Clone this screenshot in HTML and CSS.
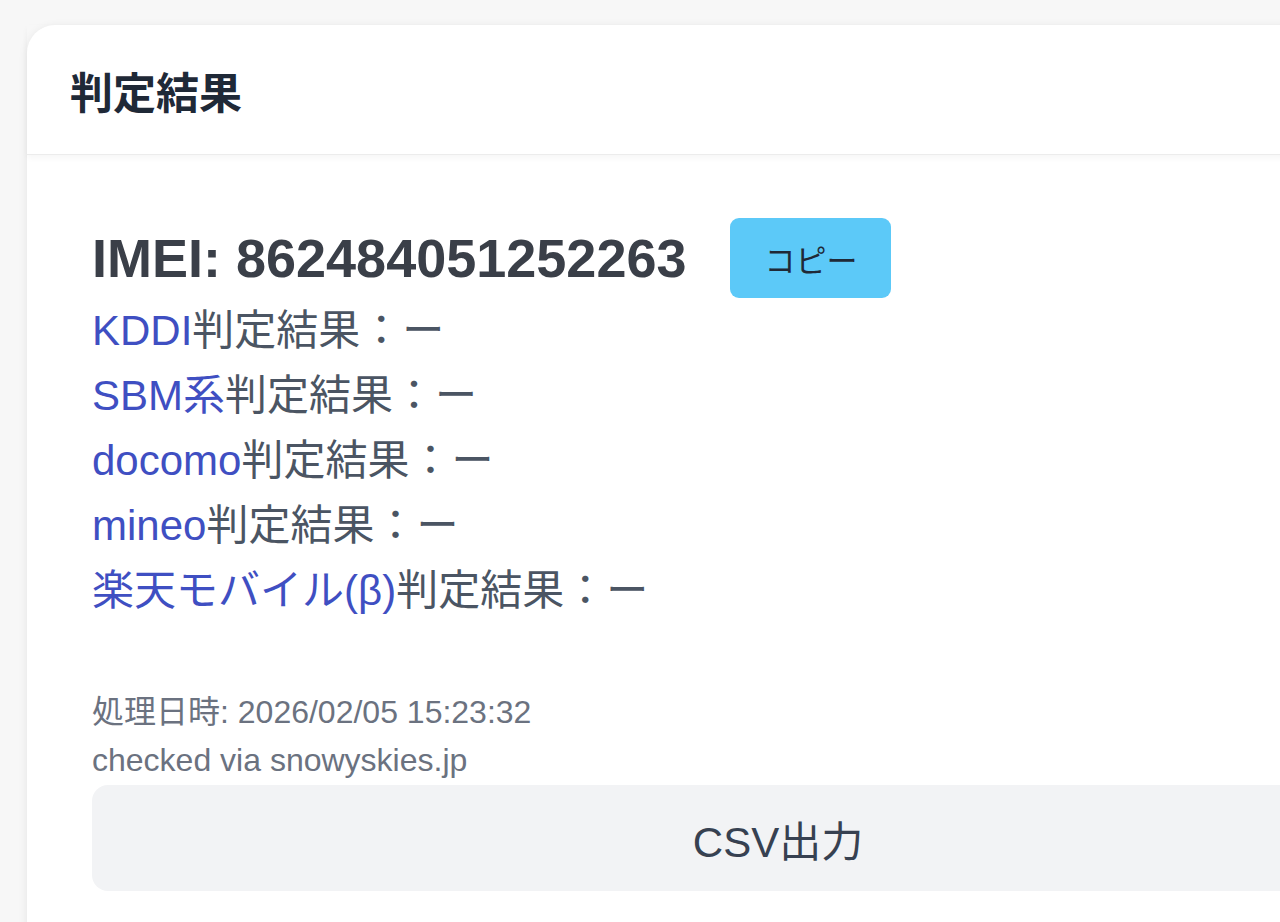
FILE: index.html
```html
<!DOCTYPE html>
<html lang="ja">
<head>
<meta charset="utf-8">
<title>判定結果</title>
<link rel="stylesheet" href="styles.css">
</head>
<body>

<div class="result_card">
	<div class="card_header">
		<h2 class="card_title">判定結果</h2>
	</div>

	<div class="card_body">
		<div class="imei_row">
			<span class="imei_text">IMEI: 862484051252263</span>
			<button class="copy_btn">コピー</button>
		</div>

		<div class="result_line"><span class="carrier">KDDI</span>判定結果：ー</div>
		<div class="result_line"><span class="carrier">SBM系</span>判定結果：ー</div>
		<div class="result_line"><span class="carrier">docomo</span>判定結果：ー</div>
		<div class="result_line"><span class="carrier">mineo</span>判定結果：ー</div>
		<div class="result_line"><span class="carrier">楽天モバイル(β)</span>判定結果：ー</div>

		<div class="meta_block">
			<div class="meta_line">処理日時: 2026/02/05 15:23:32</div>
			<div class="meta_line">checked via snowyskies.jp</div>
		</div>

		<button class="csv_btn">CSV出力</button>
	</div>
</div>

</body>
</html>
```

FILE: styles.css
```css
html, body { height: 100%; }
body {
	margin: 0;
	padding: 25px 0 0 27px;
	background-color: #f7f7f7;
	overflow: hidden;
	font-family: "Liberation Sans", "Noto Sans CJK JP", sans-serif;
	color: #4b5563;
}

.result_card {
	width: 1500px;
	background-color: #ffffff;
	border-radius: 28px;
	box-shadow: 0 2px 10px rgba(0, 0, 0, 0.08);
}

.card_header {
	height: 129px;
	padding: 0 43px;
	display: flex;
	align-items: center;
	border-bottom: 1px solid #ececec;
	box-shadow: 0 3px 6px rgba(0, 0, 0, 0.04);
}
.card_title {
	margin: 0;
	font-size: 43px;
	font-weight: bold;
	color: #1f2937;
}

.card_body {
	padding: 63px 63px 120px 65px;
}

.imei_row {
	display: flex;
	align-items: center;
	gap: 44px;
	height: 80px;
}
.imei_text {
	font-size: 54px;
	font-weight: bold;
	color: #3a3f48;
}
.copy_btn {
	height: 80px;
	padding: 0 34px;
	border: none;
	border-radius: 9px;
	background-color: #5cc9f8;
	color: #1f2937;
	font-family: "Liberation Sans", "Noto Sans CJK JP", sans-serif;
	font-size: 31px;
}

.result_line {
	font-size: 42px;
	line-height: 65px;
	color: #4b5563;
}
.carrier { color: #3f4fc2; }

.meta_block { margin-top: 65px; }
.meta_line {
	font-size: 32px;
	line-height: 48px;
	color: #6b7280;
}

.csv_btn {
	display: block;
	width: 100%;
	height: 106px;
	margin-top: 1px;
	border: none;
	border-radius: 16px;
	background-color: #f2f3f5;
	color: #374151;
	font-family: "Liberation Sans", "Noto Sans CJK JP", sans-serif;
	font-size: 42px;
}
```
